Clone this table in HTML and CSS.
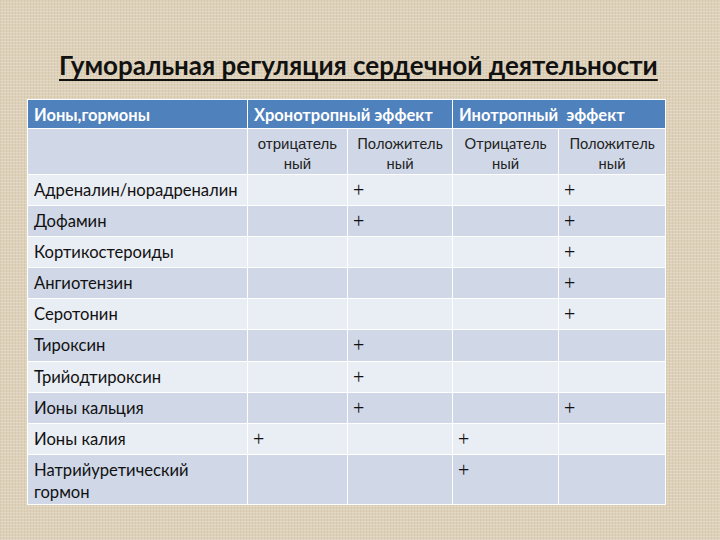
FILE: index.html
```html
<!DOCTYPE html>
<html lang="ru">
<head>
<meta charset="utf-8">
<title>Гуморальная регуляция сердечной деятельности</title>
<link rel="stylesheet" href="styles.css">
</head>
<body>
<div class="slide">
  <h1 class="title">Гуморальная регуляция сердечной деятельности</h1>
  <table class="grid">
    <colgroup>
      <col class="c1"><col class="c2"><col class="c3"><col class="c4"><col class="c5">
    </colgroup>
    <thead>
      <tr class="head">
        <th>Ионы,гормоны</th>
        <th colspan="2">Хронотропный эффект</th>
        <th colspan="2">Инотропный&nbsp; эффект</th>
      </tr>
    </thead>
    <tbody>
      <tr class="sub dark">
        <td></td>
        <td class="ctr arial">отрицатель<br>ный</td>
        <td class="ctr">Положитель<br>ный</td>
        <td class="ctr">Отрицатель<br>ный</td>
        <td class="ctr">Положитель<br>ный</td>
      </tr>
      <tr class="light"><td>Адреналин/норадреналин</td><td></td><td class="plus">+</td><td></td><td class="plus">+</td></tr>
      <tr class="dark"><td>Дофамин</td><td></td><td class="plus">+</td><td></td><td class="plus">+</td></tr>
      <tr class="light"><td>Кортикостероиды</td><td></td><td></td><td></td><td class="plus">+</td></tr>
      <tr class="dark"><td>Ангиотензин</td><td></td><td></td><td></td><td class="plus">+</td></tr>
      <tr class="light"><td>Серотонин</td><td></td><td></td><td></td><td class="plus">+</td></tr>
      <tr class="dark"><td>Тироксин</td><td></td><td class="plus">+</td><td></td><td></td></tr>
      <tr class="light"><td>Трийодтироксин</td><td></td><td class="plus">+</td><td></td><td></td></tr>
      <tr class="dark"><td>Ионы кальция</td><td></td><td class="plus">+</td><td></td><td class="plus">+</td></tr>
      <tr class="light"><td>Ионы калия</td><td class="plus">+</td><td></td><td class="plus">+</td><td></td></tr>
      <tr class="dark tall"><td>Натрийуретический<br>гормон</td><td></td><td></td><td class="plus">+</td><td></td></tr>
    </tbody>
  </table>
</div>
</body>
</html>
```
FILE: styles.css
```css
* { box-sizing: border-box; }
html, body { margin: 0; padding: 0; }
body {
  width: 720px;
  height: 540px;
  overflow: hidden;
  background-color: #ddd1ba;
  background-image:
    repeating-linear-gradient(0deg, rgba(255,255,255,0.18) 0 1px, transparent 1px 3px),
    repeating-linear-gradient(90deg, rgba(150,120,75,0.10) 0 1px, transparent 1px 3px);
  font-family: Lato, "Open Sans", sans-serif;
}
.slide {
  display: flex;
  flex-direction: column;
  align-items: flex-start;
  padding: 48px 0 0 27px;
}
.title {
  margin: 0 0 0 32px;
  height: 51px;
  font-size: 26px;
  font-weight: bold;
  color: #111;
  text-decoration: underline;
  text-decoration-thickness: 2px;
  text-underline-offset: 4px;
  line-height: 34px;
  white-space: nowrap;
}
.grid {
  border-collapse: collapse;
  table-layout: fixed;
  width: 638px;
}
.c1 { width: 220px; }
.c2 { width: 100px; }
.c3 { width: 105px; }
.c4 { width: 106px; }
.c5 { width: 107px; }
.grid th, .grid td {
  border: 1px solid #ffffff;
  padding: 0 6px;
  text-align: left;
  vertical-align: top;
  color: #111;
  font-size: 16.6px;
  font-weight: normal;
}
.head { height: 29px; }
.head th {
  background: #4f81bd;
  color: #fff;
  font-weight: bold;
  font-size: 16.5px;
  vertical-align: middle;
  padding-top: 1px;
}
.dark td { background: #d0d8e8; }
.light td { background: #e9edf4; }
.grid tbody tr { height: 31.1px; }
.grid tbody td { padding-top: 5px; line-height: 20px; }
.grid tbody tr.sub { height: 45px; }
.sub td { padding-top: 5px; line-height: 17px; font-size: 14.6px; color: #222; }
.ctr { text-align: center !important; }
.arial { font-family: "Liberation Sans", Arial, sans-serif; font-size: 15px !important; }
.plus {
  font-family: "Liberation Serif", "Times New Roman", serif;
  font-size: 20px !important;
  padding-left: 5px !important;
}
.grid tbody tr.tall { height: 50px; }
.grid tbody tr.tall td { line-height: 22px; padding-top: 4px; }
```
